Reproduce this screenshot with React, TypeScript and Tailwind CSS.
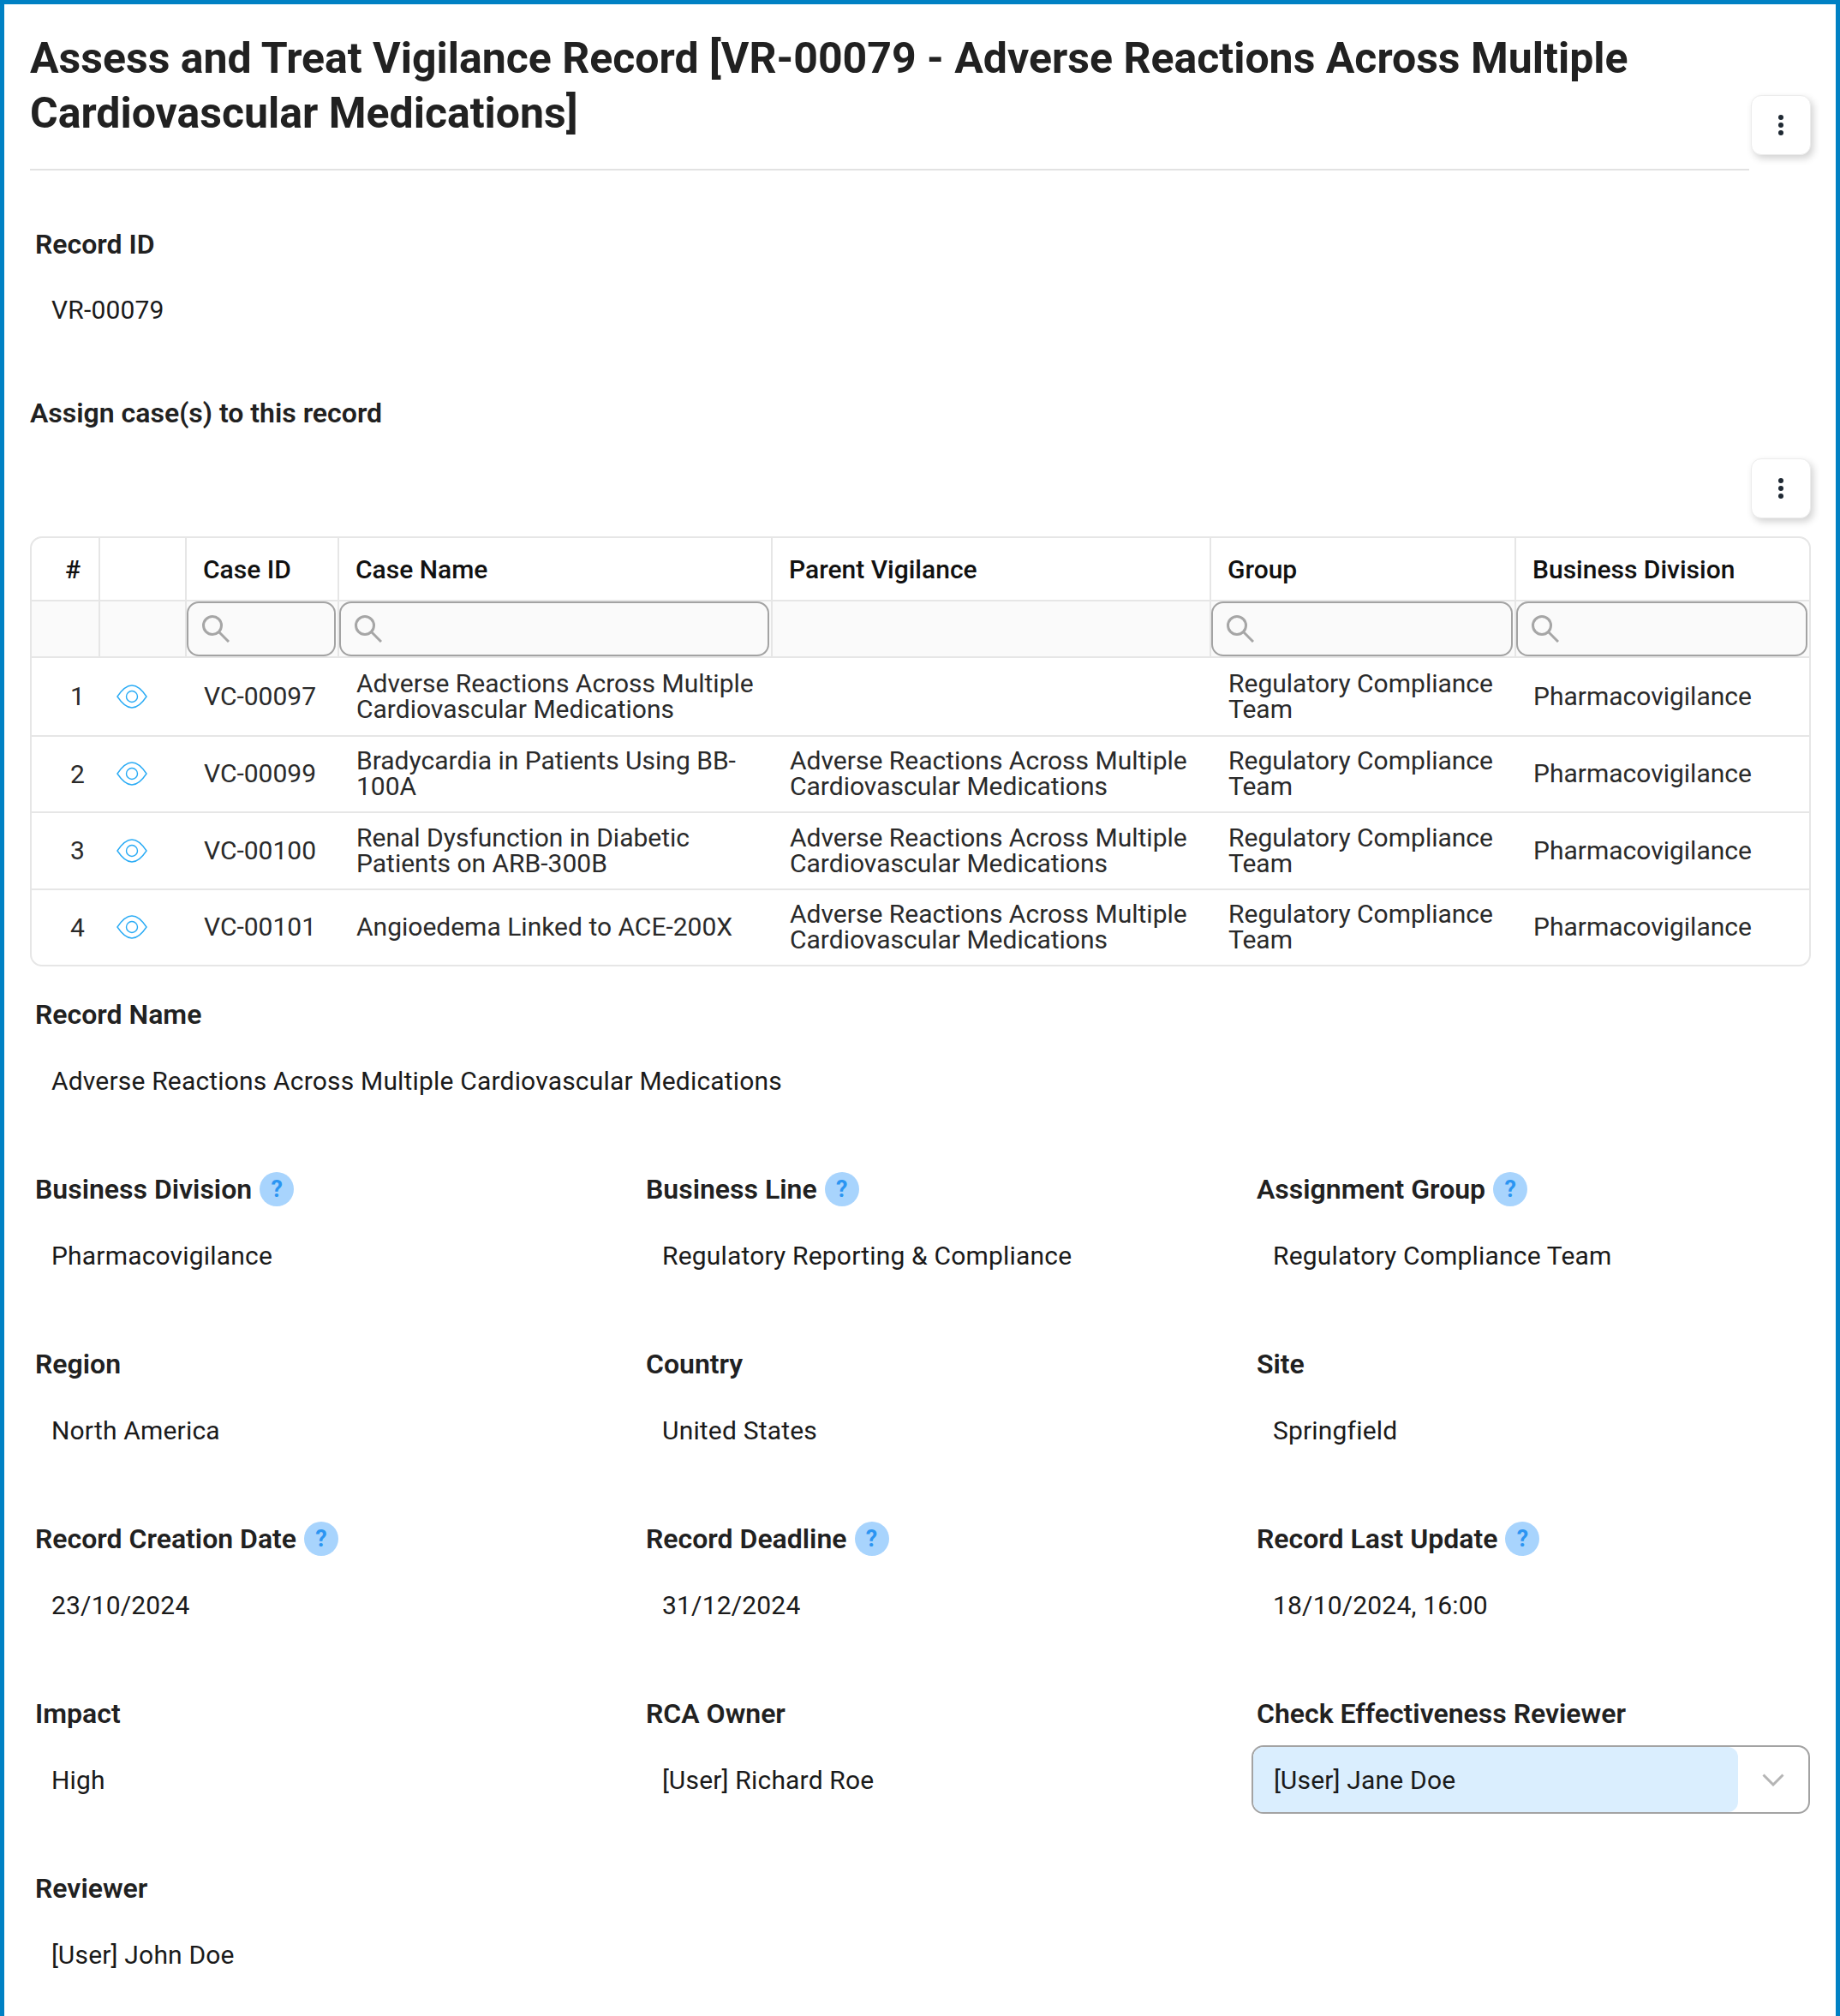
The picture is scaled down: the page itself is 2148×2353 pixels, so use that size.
import React from "react";

const parent = "Adverse Reactions Across Multiple Cardiovascular Medications";
const group = "Regulatory Compliance Team";
const cases = [
  { id: "VC-00097", name: parent, parent: "" },
  { id: "VC-00099", name: "Bradycardia in Patients Using BB-100A", parent },
  { id: "VC-00100", name: "Renal Dysfunction in Diabetic Patients on ARB-300B", parent },
  { id: "VC-00101", name: "Angioedema Linked to ACE-200X", parent },
];

const columns = "grid grid-cols-[78px_101px_178px_506px_512px_356px_1fr]";

function Kebab() {
  return (
    <button className="flex h-[70px] w-[70px] shrink-0 flex-col items-center justify-center gap-[3px] rounded-xl border border-[#ececec] bg-white shadow-[3px_4px_8px_rgba(0,0,0,0.18)]">
      <span className="h-[6px] w-[6px] rounded-full bg-[#1f2933]" />
      <span className="h-[6px] w-[6px] rounded-full bg-[#1f2933]" />
      <span className="h-[6px] w-[6px] rounded-full bg-[#1f2933]" />
    </button>
  );
}

function Help() {
  return (
    <span className="ml-[9px] flex h-10 w-10 shrink-0 items-center justify-center rounded-full bg-[#a8d4fd] text-[27px] leading-none font-bold text-[#2b95f2]">
      ?
    </span>
  );
}

function Field({ label, value, help }: { label: string; value: string; help?: boolean }) {
  return (
    <div className="h-[204px] pt-[6px]">
      <div className="flex h-10 items-center pl-[6px] text-[32px] font-semibold text-[#212121]">
        {label}
        {help && <Help />}
      </div>
      <div className="mt-[38px] pl-[25px] text-[30px] leading-10 tracking-[0.18px] text-[#1a1a1a]">{value}</div>
    </div>
  );
}

function SearchIcon() {
  return (
    <svg viewBox="0 0 32 32" className="h-8 w-8" fill="none" stroke="#a6a6a6" strokeWidth={3}>
      <circle cx="12" cy="12" r="10.5" />
      <path d="M19.5 19.5 31 31" />
    </svg>
  );
}

function EyeIcon() {
  return (
    <svg viewBox="0 0 36 28" className="h-7 w-9" fill="none" stroke="#29abf5" strokeWidth={1.4}>
      <path d="M1 14C7 5 12 1 18 1s11 4 17 13c-6 9-11 13-17 13S7 23 1 14Z" />
      <circle cx="18" cy="14" r="6.5" />
    </svg>
  );
}

function FilterCell() {
  return (
    <div className="flex items-center border-l-2 border-[#e6e6e6] pr-[2px]">
      <div className="flex h-[64px] w-full items-center rounded-[14px] border-2 border-[#a3a3a3] pl-[16px]">
        <SearchIcon />
      </div>
    </div>
  );
}

function HeadCell({ children }: { children?: React.ReactNode }) {
  return (
    <div className="flex items-center border-l-2 border-[#e6e6e6] pl-[19px] text-[30px] font-medium text-[#111111]">
      {children}
    </div>
  );
}

function BodyCell({ children }: { children?: React.ReactNode }) {
  return <div className="flex items-center pr-3 pl-[22px] text-[30px] leading-[30px] text-[#2a2a2a]">{children}</div>;
}

export default function App() {
  return (
    <div className="h-[2353px] overflow-hidden border-x-[5px] border-t-[5px] border-[#0081c4] bg-white pr-[29px] pl-[30px] font-['Roboto',sans-serif]">
      {/* Title */}
      <div className="flex items-end">
        <div className="w-[2007px] border-b-2 border-[#e2e2e2] pt-[31px] pb-[33px]">
          <h1 className="text-[50px] leading-[64px] font-bold text-[#212121]">
            Assess and Treat Vigilance Record [VR-00079 - Adverse Reactions Across Multiple Cardiovascular Medications]
          </h1>
        </div>
        <div className="mb-[18px] ml-[2px]">
          <Kebab />
        </div>
      </div>

      <div className="h-[204px] pt-[66px]">
        <div className="flex h-10 items-center pl-[6px] text-[32px] font-semibold text-[#212121]">Record ID</div>
        <div className="mt-[37px] pl-[25px] text-[30px] leading-10 tracking-[0.18px] text-[#1a1a1a]">VR-00079</div>
      </div>

      {/* Assign cases */}
      <div className="mt-[59px] text-[32px] leading-10 font-semibold text-[#212121]">Assign case(s) to this record</div>
      <div className="mt-[33px] flex justify-end">
        <Kebab />
      </div>

      <div className="mt-[21px] overflow-hidden rounded-[14px] border-2 border-[#e6e6e6]">
        <div className={`${columns} h-[72px]`}>
          <div className="flex items-center justify-center pl-[18px] text-[30px] font-medium text-[#111111]">#</div>
          <HeadCell />
          <HeadCell>Case ID</HeadCell>
          <HeadCell>Case Name</HeadCell>
          <HeadCell>Parent Vigilance</HeadCell>
          <HeadCell>Group</HeadCell>
          <HeadCell>Business Division</HeadCell>
        </div>
        <div className={`${columns} h-[68px] border-y-2 border-[#e6e6e6] bg-[#fafafa]`}>
          <div />
          <div className="border-l-2 border-[#e6e6e6]" />
          <FilterCell />
          <FilterCell />
          <div className="border-l-2 border-[#e6e6e6]" />
          <FilterCell />
          <FilterCell />
        </div>
        {cases.map((row, i) => (
          <div key={row.id} className={`${columns} h-[89.5px] ${i > 0 ? "border-t-2 border-[#e6e6e6]" : ""}`}>
            <div className="flex items-center justify-center pl-[29px] text-[30px] text-[#2a2a2a]">{i + 1}</div>
            <div className="flex items-center pl-[21px]">
              <EyeIcon />
            </div>
            <BodyCell>{row.id}</BodyCell>
            <BodyCell>{row.name}</BodyCell>
            <BodyCell>{row.parent}</BodyCell>
            <BodyCell>{group}</BodyCell>
            <BodyCell>Pharmacovigilance</BodyCell>
          </div>
        ))}
      </div>

      <div className="mt-[30px]">
        <Field label="Record Name" value={parent} />
      </div>

      <div className="grid w-[2139px] grid-cols-3">
        <Field label="Business Division" value="Pharmacovigilance" help />
        <Field label="Business Line" value="Regulatory Reporting & Compliance" help />
        <Field label="Assignment Group" value="Regulatory Compliance Team" help />
        <Field label="Region" value="North America" />
        <Field label="Country" value="United States" />
        <Field label="Site" value="Springfield" />
        <Field label="Record Creation Date" value="23/10/2024" help />
        <Field label="Record Deadline" value="31/12/2024" help />
        <Field label="Record Last Update" value="18/10/2024, 16:00" help />
        <Field label="Impact" value="High" />
        <Field label="RCA Owner" value="[User] Richard Roe" />
        <div className="h-[204px] pt-[6px]">
          <div className="flex h-10 items-center pl-[6px] text-[32px] font-semibold text-[#212121]">
            Check Effectiveness Reviewer
          </div>
          <div className="mt-[17px] flex h-[80px] w-[652px] items-stretch rounded-[14px] border-2 border-[#a3a3a3]">
            <div className="flex w-[566px] items-center rounded-[12px] bg-[#daeefe] pl-[24px] text-[30px] tracking-[0.18px] text-[#1a1a1a]">
              [User] Jane Doe
            </div>
            <div className="flex flex-1 items-center justify-center">
              <svg viewBox="0 0 26 15" className="h-[15px] w-[26px]" fill="none" stroke="#b5b5b5" strokeWidth={3}>
                <path d="M1.5 1.5 13 13 24.5 1.5" />
              </svg>
            </div>
          </div>
        </div>
        <Field label="Reviewer" value="[User] John Doe" />
      </div>
    </div>
  );
}
